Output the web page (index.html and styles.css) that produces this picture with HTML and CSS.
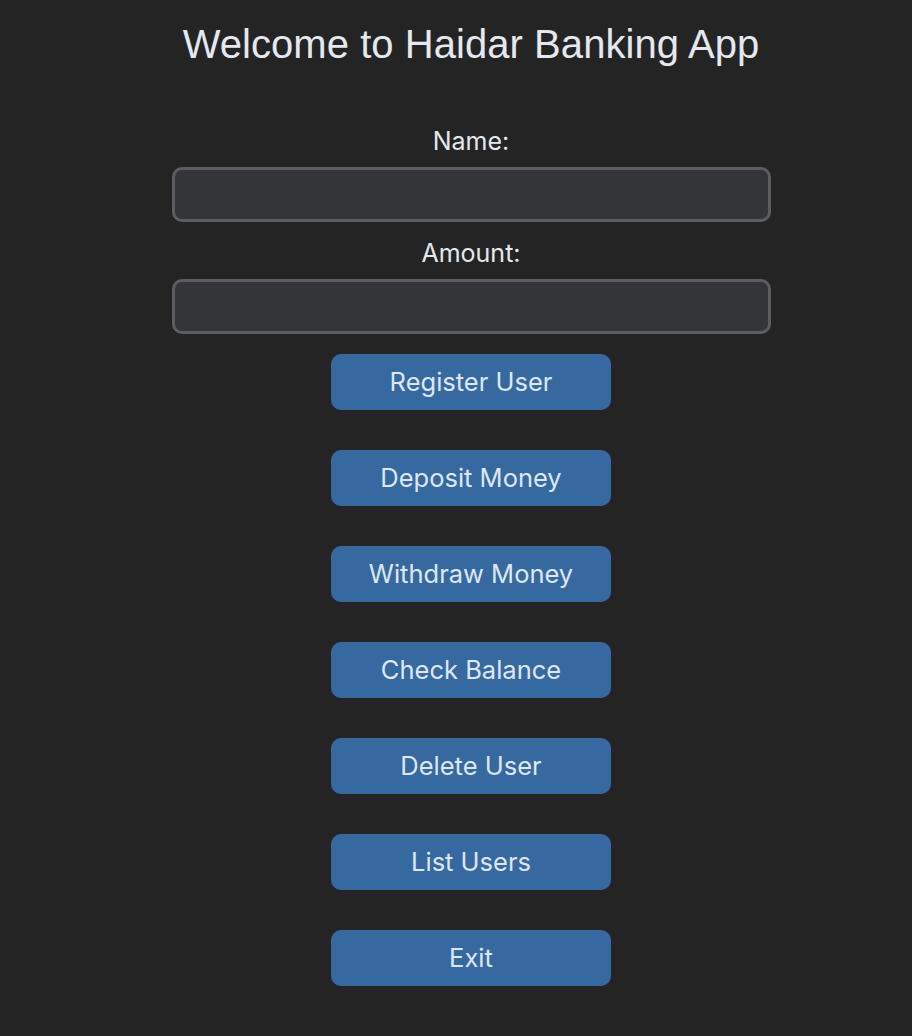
FILE: index.html
```html
<!DOCTYPE html>
<html lang="en">
<head>
<meta charset="utf-8">
<title>Haidar Banking App</title>
<link rel="stylesheet" href="styles.css">
</head>
<body>
<main class="app">
  <h1 class="title">Welcome to Haidar Banking App</h1>
  <form class="form">
    <label class="label" for="name">Name:</label>
    <input class="field" id="name" type="text">
    <label class="label label-second" for="amount">Amount:</label>
    <input class="field" id="amount" type="text">
  </form>
  <div class="actions">
    <button class="btn" type="button">Register User</button>
    <button class="btn" type="button">Deposit Money</button>
    <button class="btn" type="button">Withdraw Money</button>
    <button class="btn" type="button">Check Balance</button>
    <button class="btn" type="button">Delete User</button>
    <button class="btn" type="button">List Users</button>
    <button class="btn" type="button">Exit</button>
  </div>
</main>
</body>
</html>
```
FILE: styles.css
```css
html, body {
  margin: 0;
  padding: 0;
  background: #242424;
}

body {
  min-height: 1036px;
  color: #e2e6ee;
  font-family: Inter, "Open Sans", "Noto Sans", sans-serif;
}

.app {
  display: flex;
  flex-direction: column;
  align-items: center;
  padding: 21px 0 0 30px;
}

.title {
  margin: 0;
  font-family: "Liberation Sans", Arial, sans-serif;
  font-weight: 400;
  font-size: 40px;
  line-height: 46px;
  color: #e4e8f0;
  letter-spacing: 0.05px;
}

.form {
  display: flex;
  flex-direction: column;
  align-items: center;
  margin-top: 59px;
}

.label {
  font-size: 25px;
  line-height: 30px;
  height: 30px;
  color: #e4e8f0;
}

.label-second {
  margin-top: 16px;
}

.field {
  box-sizing: border-box;
  margin: 11px 0 0;
  width: 599px;
  height: 55px;
  border: 3px solid #5b5d61;
  border-radius: 10px;
  background: #343538;
  outline: none;
  color: #e4e8f0;
  font: inherit;
}

.actions {
  display: flex;
  flex-direction: column;
  align-items: center;
  gap: 40px;
  margin-top: 20px;
}

.btn {
  width: 280px;
  height: 56px;
  border: none;
  border-radius: 10px;
  background: #3569a0;
  color: #dde6f2;
  font-family: Inter, "Open Sans", "Noto Sans", sans-serif;
  font-size: 25.5px;
  line-height: 1;
  padding: 0;
}
```
